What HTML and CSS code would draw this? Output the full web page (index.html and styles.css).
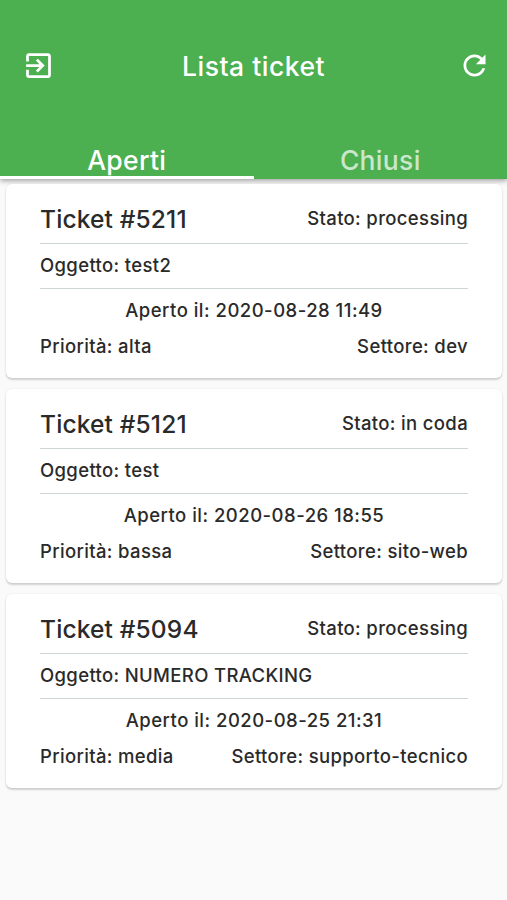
FILE: index.html
```html
<!DOCTYPE html>
<html lang="it">
<head>
    <meta charset="UTF-8">
    <meta name="viewport" content="width=device-width, initial-scale=1.0">
    <title>Lista ticket</title>
    <link rel="stylesheet" href="styles.css">
</head>
<body>
    <header class="appbar">
        <div class="toolbar">
            <svg class="icon" viewBox="0 0 24 24"><path d="M10.09 15.59L11.5 17l5-5-5-5-1.41 1.41L12.67 11H3v2h9.67l-2.58 2.59zM19 3H5c-1.11 0-2 .9-2 2v4h2V5h14v14H5v-4H3v4c0 1.1.89 2 2 2h14c1.1 0 2-.9 2-2V5c0-1.1-.9-2-2-2z"/></svg>
            <h1 class="title">Lista ticket</h1>
            <svg class="icon" viewBox="0 0 24 24"><path d="M17.65 6.35C16.2 4.9 14.21 4 12 4c-4.42 0-7.99 3.58-7.99 8s3.57 8 7.99 8c3.73 0 6.84-2.55 7.73-6h-2.08c-.82 2.33-3.04 4-5.65 4-3.31 0-6-2.69-6-6s2.69-6 6-6c1.66 0 3.14.69 4.22 1.78L13 11h7V4l-2.35 2.35z"/></svg>
        </div>
        <nav class="tabs">
            <div class="tab active"><span>Aperti</span></div>
            <div class="tab"><span>Chiusi</span></div>
        </nav>
    </header>

    <main class="list">
        <section class="card">
            <div class="row head">
                <h2>Ticket #5211</h2>
                <span>Stato: processing</span>
            </div>
            <div class="subject">Oggetto: test2</div>
            <div class="date">Aperto il: 2020-08-28 11:49</div>
            <div class="row">
                <span>Priorità: alta</span>
                <span>Settore: dev</span>
            </div>
        </section>

        <section class="card">
            <div class="row head">
                <h2>Ticket #5121</h2>
                <span>Stato: in coda</span>
            </div>
            <div class="subject">Oggetto: test</div>
            <div class="date">Aperto il: 2020-08-26 18:55</div>
            <div class="row">
                <span>Priorità: bassa</span>
                <span>Settore: sito-web</span>
            </div>
        </section>

        <section class="card">
            <div class="row head">
                <h2>Ticket #5094</h2>
                <span>Stato: processing</span>
            </div>
            <div class="subject">Oggetto: NUMERO TRACKING</div>
            <div class="date">Aperto il: 2020-08-25 21:31</div>
            <div class="row">
                <span>Priorità: media</span>
                <span>Settore: supporto-tecnico</span>
            </div>
        </section>
    </main>
</body>
</html>
```

FILE: styles.css
```css
* {
    box-sizing: border-box;
}

body {
    margin: 0;
    min-height: 100vh;
    background-color: #fafafa;
    color: #2a2a2a;
    font-family: Inter, 'Liberation Sans', sans-serif;
    font-size: 18.5px;
    font-weight: 450;
    letter-spacing: 0.35px;
}

h1, h2 {
    margin: 0;
}

.appbar {
    height: 179px;
    padding-top: 28px;
    background-color: #4caf50;
    color: #fff;
    box-shadow: 0 2px 5px rgba(0, 0, 0, 0.35);
}

.toolbar {
    display: flex;
    align-items: center;
    justify-content: space-between;
    height: 75px;
    padding: 0 16px 0 22px;
}

.icon {
    width: 33px;
    height: 33px;
    fill: #fff;
}

.title {
    margin-right: 6px;
    font-size: 26.5px;
    font-weight: 500;
    letter-spacing: 0.5px;
}

.tabs {
    display: flex;
    height: 76px;
}

.tab {
    flex: 1;
    display: flex;
    align-items: flex-end;
    justify-content: center;
    border-bottom: 3px solid transparent;
    font-size: 26.5px;
    line-height: 31px;
    letter-spacing: 0.3px;
}

.tab span {
    opacity: 0.7;
}

.active {
    border-bottom-color: #fff;
}

.active span {
    opacity: 1;
}

.list {
    padding: 5px 5px 0 6px;
}

.card {
    height: 194px;
    margin-bottom: 11px;
    padding: 6px 34px 0;
    background-color: #fff;
    border-radius: 6px;
    box-shadow: 0 2px 2px rgba(0, 0, 0, 0.16), 0 0 2px rgba(0, 0, 0, 0.08);
}

.row {
    display: flex;
    align-items: center;
    justify-content: space-between;
    height: 29px;
}

.head {
    height: 54px;
    padding-top: 2px;
    border-bottom: 1px solid #ccd6d3;
}

.head h2 {
    padding-top: 2px;
    font-size: 24.5px;
    font-weight: 450;
    letter-spacing: 0.15px;
}

.subject {
    height: 45px;
    line-height: 43px;
    border-bottom: 1px solid #ccd6d3;
}

.date {
    height: 42px;
    line-height: 42px;
    text-align: center;
    letter-spacing: 0.48px;
}
```
